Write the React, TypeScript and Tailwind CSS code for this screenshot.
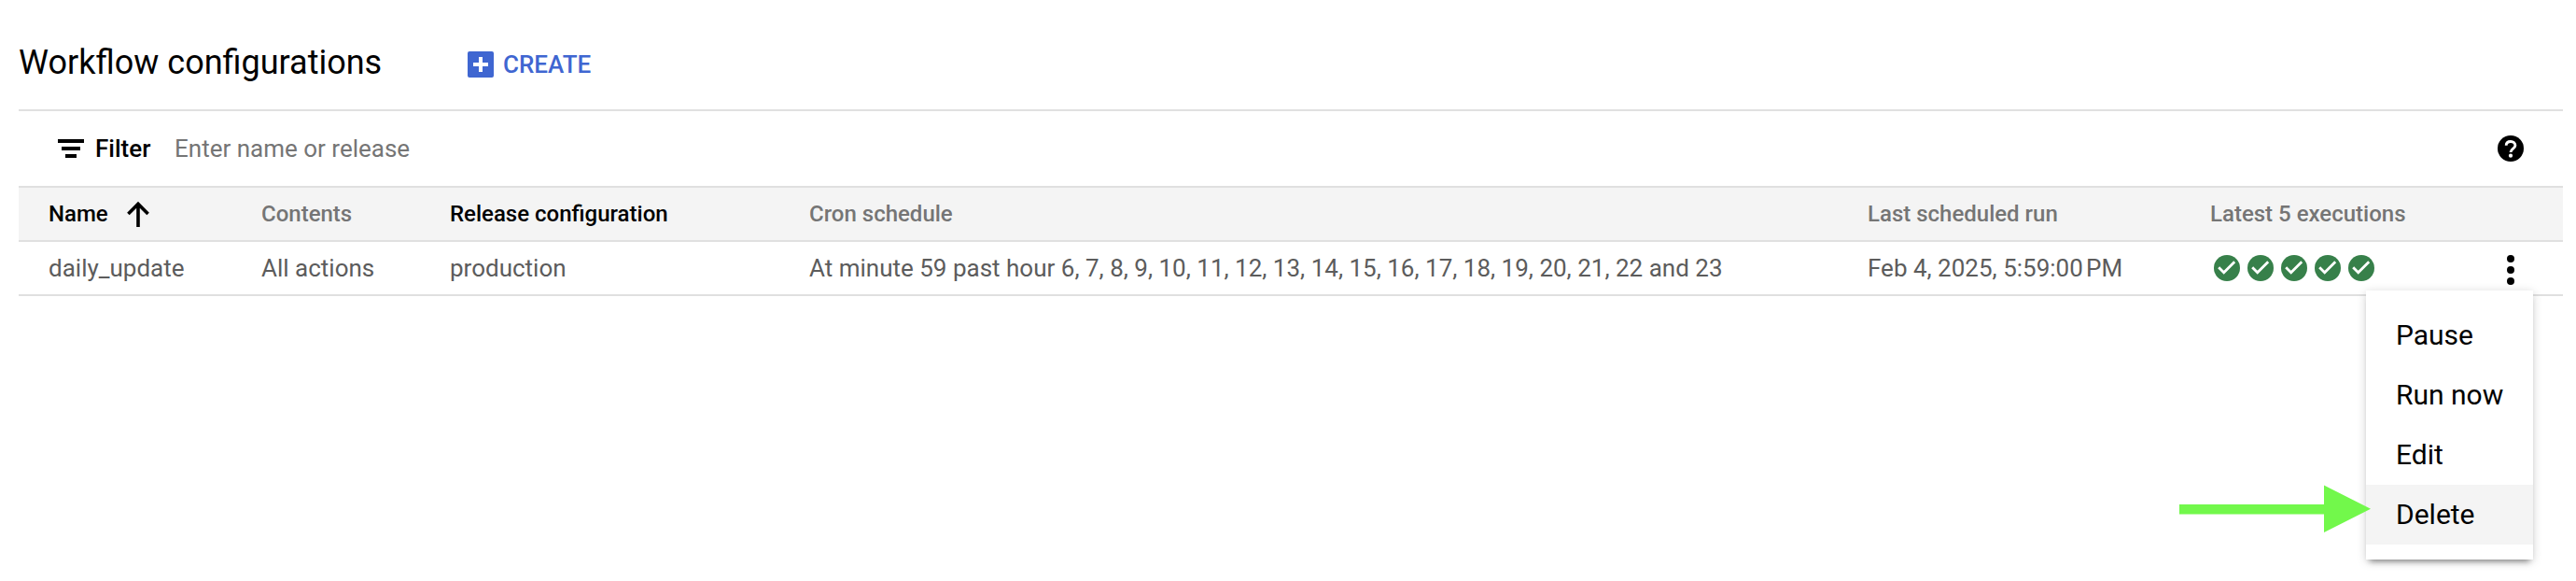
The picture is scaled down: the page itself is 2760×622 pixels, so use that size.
import React from "react";

const CheckIcon = () => (
  <svg className="h-9 w-9 shrink-0" viewBox="0 0 36 36">
    <circle cx="18" cy="18" r="14" fill="#37804a" />
    <path d="M9.2 17.2l5.5 5.5L26.2 11.2" fill="none" stroke="#fff" strokeWidth="2.8" />
  </svg>
);

const HelpIcon = () => (
  <svg className="h-7 w-7" viewBox="0 0 28 28">
    <circle cx="14" cy="14" r="14" />
    <path d="M9.2 10.8C9.2 8 11.3 6.5 14 6.5s4.9 1.7 4.9 4.3C18.9 14 14 14.2 14 18" fill="none" stroke="#fff" strokeWidth="2.9" />
    <circle cx="14" cy="21.7" r="2.1" fill="#fff" />
  </svg>
);

const menuItems = ["Pause", "Run now", "Edit", "Delete"];
const grid = "grid grid-cols-[228px_202px_385px_1134px_367px_1fr] items-center pl-8";

export default function App() {
  return (
    <div className="relative h-[622px] w-[2760px] overflow-hidden bg-white pl-5 pr-[14px] font-['Roboto',sans-serif] text-black">
      <header className="flex h-[117px] items-center pt-[17px]">
        <h1 className="w-[481px] text-[36px] leading-[48px]">Workflow configurations</h1>
        <button className="mt-1 flex items-center text-[26px] font-medium leading-8 text-[#3f66d1]">
          <svg className="mr-[10px] h-7 w-7" viewBox="0 0 28 28">
            <rect width="28" height="28" rx="2" fill="#3f66d1" />
            <path d="M14 6v16M6 14h16" stroke="#fff" strokeWidth="4" />
          </svg>
          CREATE
        </button>
      </header>
      <div className="flex h-[82px] items-center border-t-2 border-[#e0e0e0] pl-[42px] pr-[42px]">
        <svg className="mr-3 h-5 w-7" viewBox="0 0 28 20">
          <path d="M0 0h28v4H0zM4 8h20v4H4zM8 16h12v4H8z" />
        </svg>
        <span className="w-[85px] text-[26px] font-medium">Filter</span>
        <span className="grow text-[26px] text-[#757575]">Enter name or release</span>
        <HelpIcon />
      </div>
      <div className={`${grid} h-[60px] border-y-2 border-[#e0e0e0] bg-[#f4f4f4] text-[24px] font-medium text-[#757575]`}>
        <span className="flex items-center text-black">
          Name
          <svg className="ml-[20px] h-7 w-6" viewBox="0 0 24 28">
            <path d="M12 28V4M1.4 14L12 3.4 22.6 14" fill="none" stroke="#000" strokeWidth="3.6" />
          </svg>
        </span>
        <span>Contents</span>
        <span className="text-black">Release configuration</span>
        <span>Cron schedule</span>
        <span>Last scheduled run</span>
        <span>Latest 5 executions</span>
      </div>
      <div className={`${grid} h-[58px] border-b-2 border-[#e0e0e0] text-[26px] text-[#5c5c5c]`}>
        <span>daily_update</span>
        <span>All actions</span>
        <span>production</span>
        <span>At minute 59 past hour 6, 7, 8, 9, 10, 11, 12, 13, 14, 15, 16, 17, 18, 19, 20, 21, 22 and 23</span>
        <span>Feb 4, 2025, 5:59:00{"\u202f"}PM</span>
        <div className="flex items-center justify-between pr-[52px]">
          <div className="flex">
            {[0, 1, 2, 3, 4].map((i) => (
              <CheckIcon key={i} />
            ))}
          </div>
          <svg className="mt-1 h-8 w-2" viewBox="0 0 8 32">
            <circle cx="4" cy="4" r="4" />
            <circle cx="4" cy="16" r="4" />
            <circle cx="4" cy="28" r="4" />
          </svg>
        </div>
      </div>
      <div className="absolute left-[2535px] top-[311px] w-[179px] bg-white py-4 shadow-[0_6px_6px_-4px_rgba(0,0,0,0.4),0_2px_10px_rgba(0,0,0,0.18)]">
        {menuItems.map((item) => (
          <div key={item} className={`flex h-16 items-center pb-0.5 pl-8 text-[30px] ${item === "Delete" ? "bg-[#f4f4f4]" : ""}`}>
            {item}
          </div>
        ))}
      </div>
      <svg className="absolute left-[2335px] top-[519px] h-[51px] w-[205px]" viewBox="0 0 205 51">
        <path d="M0 21h155V.5l50 25.2L155 51V31.5H0z" fill="#72f84b" />
      </svg>
    </div>
  );
}
